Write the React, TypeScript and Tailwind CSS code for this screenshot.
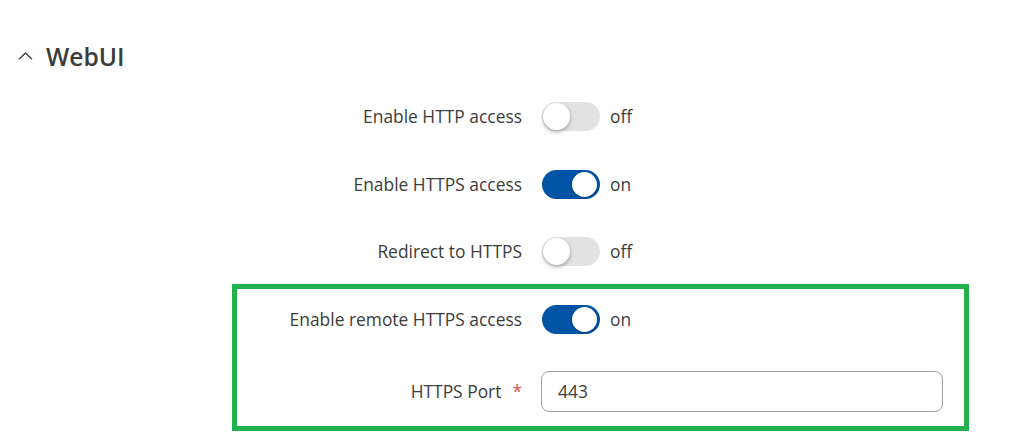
import React from "react";

function Toggle({ on }: { on: boolean }) {
  return (
    <div className="flex items-center">
      <div
        className={
          on
            ? "relative h-[29px] w-[58px] rounded-full bg-[#0054a6]"
            : "relative h-[29px] w-[58px] rounded-full bg-[#e2e2e2]"
        }
      >
        <div
          className={
            on
              ? "absolute right-[3px] top-[2px] h-[25px] w-[25px] rounded-full bg-white shadow-[0_1px_3px_rgba(0,0,0,0.3)]"
              : "absolute left-[1px] top-[1px] h-[27px] w-[27px] rounded-full bg-white shadow-[0_2px_4px_rgba(0,0,0,0.3)]"
          }
        />
      </div>
      <span className="ml-[10px] text-[17.4px] text-[#3c3c3c]">{on ? "on" : "off"}</span>
    </div>
  );
}

function Row({ label, on, h }: { label: string; on: boolean; h: string }) {
  return (
    <div className={`flex items-center ${h}`}>
      <div className="w-[522px] text-right text-[17.4px] text-[#3c3c3c]">{label}</div>
      <div className="ml-[20px]">
        <Toggle on={on} />
      </div>
    </div>
  );
}

export default function App() {
  return (
    <div
      className="h-[437px] w-[1035px] overflow-hidden bg-white"
      style={{ fontFamily: '"Open Sans", "Noto Sans", sans-serif' }}
    >
      <div className="flex h-[82px] items-start pt-[41px]">
        <svg className="ml-[18px] mt-[11px]" width="15" height="8" viewBox="0 0 15 8" fill="none">
          <path d="M1 7.2L7.5 1L14 7.2" stroke="#404040" strokeWidth="1.4" />
        </svg>
        <span className="ml-[13px] text-[24.6px] font-semibold leading-[32px] text-[#3c3c3c]">WebUI</span>
      </div>
      <Row label="Enable HTTP access" on={false} h="h-[68px]" />
      <Row label="Enable HTTPS access" on={true} h="h-[68px]" />
      <Row label="Redirect to HTTPS" on={false} h="h-[66px]" />
      <div className="ml-[232px] w-[737px] border-[5px] border-[#22b14c] pb-[14px]">
        <div className="flex h-[60px] items-center">
          <div className="w-[285px] text-right text-[17.4px] text-[#3c3c3c]">Enable remote HTTPS access</div>
          <div className="ml-[20px]">
            <Toggle on={true} />
          </div>
        </div>
        <div className="mt-[22px] flex items-center">
          <div className="flex w-[285px] items-center justify-end text-[17.4px] text-[#3c3c3c]">
            <span>HTTPS Port</span>
            <span className="ml-[11px] text-[#d9534f]">*</span>
          </div>
          <div className="ml-[19px] flex h-[41px] w-[402px] items-center rounded-[8px] border border-[#a0a0a8] pl-[16px] text-[17.4px] text-[#3c3c3c]">
            443
          </div>
        </div>
      </div>
    </div>
  );
}
